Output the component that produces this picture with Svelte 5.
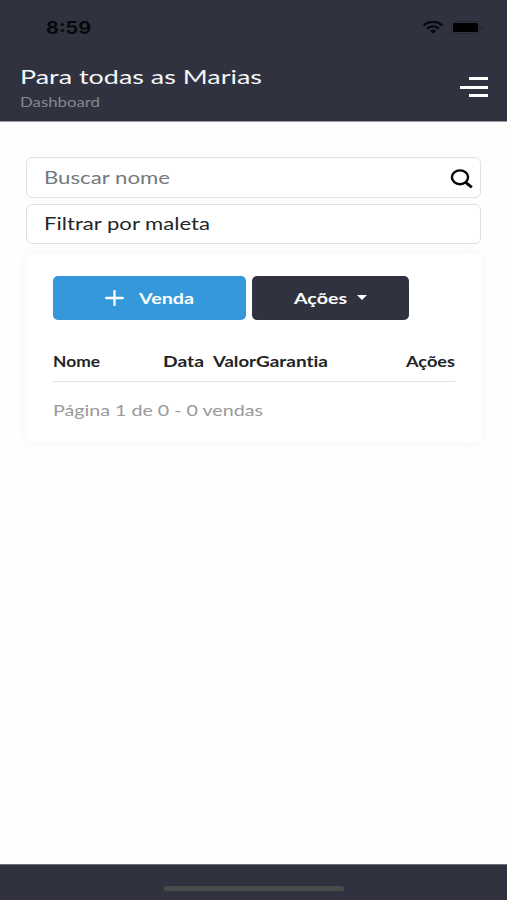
<script>
  const columns = [
    { name: 'Nome', width: 47, offset: 0 },
    { name: 'Data', width: 41, offset: 63 },
    { name: 'Valor', width: 43, offset: 9 },
    { name: 'Garantia', width: 72, offset: 0 },
    { name: 'Ações', width: 49, offset: 78 }
  ];
</script>

<!-- Text set in an expanded width; its baseline is 15px below the top of the box. -->
{#snippet wide(text, width)}
  <svg class="wide" {width} height="20" role="img" aria-label={text}>
    <text x="0" y="15" textLength={width} lengthAdjust="spacingAndGlyphs">{text}</text>
  </svg>
{/snippet}

<div class="screen">
  <header>
    <div class="status">
      <div class="time">{@render wide('8:59', 45)}</div>
      <div class="indicators">
        <span class="dots"><i></i><i></i><i></i><i></i></span>
        <svg class="wifi" width="20" height="13" viewBox="0 0 20 13">
          <g fill="none" stroke="#07080b" stroke-width="2.3">
            <path d="M.8 4.4C6-.4 14-.4 19.2 4.4" />
            <path d="M4.2 7.6c3.3-3 8.3-3 11.6 0" />
          </g>
          <path d="M10 12.5 6.7 9.8c1.8-1.5 4.8-1.5 6.6 0z" fill="#07080b" />
        </svg>
        <svg class="battery" width="32" height="13" viewBox="0 0 32 13">
          <rect x=".5" y=".5" width="28" height="12" rx="3" fill="none" stroke="#262933" />
          <rect x="2" y="2" width="25" height="9" rx="1.5" fill="#000" />
          <path d="M30 4.5q2 2 0 4z" fill="#171920" />
        </svg>
      </div>
    </div>
    <div class="bar">
      <div>
        <div class="title">{@render wide('Para todas as Marias', 242)}</div>
        <div class="subtitle">{@render wide('Dashboard', 80)}</div>
      </div>
      <button class="menu" aria-label="Menu"><i></i><i></i><i></i></button>
    </div>
  </header>

  <main>
    <div class="field search">
      {@render wide('Buscar nome', 126)}
      <svg class="glass" width="24" height="20" viewBox="0 0 24 20" fill="none" stroke="#050505">
        <ellipse cx="10" cy="8.3" rx="8.1" ry="6.9" stroke-width="2.4" />
        <path d="m15.7 13.3 6.1 5" stroke-width="2.9" />
      </svg>
    </div>
    <div class="field filter">{@render wide('Filtrar por maleta', 166)}</div>

    <section class="card">
      <div class="buttons">
        <button class="sale">
          <svg width="19" height="16" viewBox="0 0 19 16" stroke="#fff" stroke-width="2.3" stroke-linecap="round">
            <path d="M9.5 1v14M1.2 8h16.6" />
          </svg>
          {@render wide('Venda', 55)}
        </button>
        <button class="actions">
          {@render wide('Ações', 53)}
          <svg class="caret" width="10" height="5" viewBox="0 0 10 5"><path d="M0 0h10L5 5z" fill="#fff" /></svg>
        </button>
      </div>
      <div class="head">
        {#each columns as col}
          <span style="margin-left: {col.offset}px">{@render wide(col.name, col.width)}</span>
        {/each}
      </div>
      <div class="pages">{@render wide('Página 1 de 0 - 0 vendas', 210)}</div>
    </section>
  </main>

  <footer><i></i></footer>
</div>

<style>
  :global(body) { margin: 0; background: #fff; }
  .screen {
    width: 507px;
    height: 900px;
    display: flex;
    flex-direction: column;
    overflow: hidden;
    font-family: Lato, "Open Sans", sans-serif;
    font-variant-ligatures: none;
    background: #fefefe;
  }
  .screen * { box-sizing: border-box; }
  .wide { display: block; overflow: visible; flex: none; }
  .wide text { fill: currentColor; }
  button { border: 0; padding: 0; font-family: inherit; font-variant-ligatures: none; }
  header {
    height: 122px;
    flex: none;
    background: #30333f;
    border-bottom: 1px solid #9b9da3;
  }
  .status { display: flex; justify-content: space-between; height: 69px; padding: 19px 24px 0 46px; }
  .time { color: #07080b; font: 700 17px Inter, "Liberation Sans", sans-serif; }
  .indicators { display: flex; align-items: flex-start; padding-top: 1.5px; }
  .dots { display: flex; gap: 3px; padding-top: 10px; margin-right: 8px; }
  .dots i { width: 3px; height: 2px; border-radius: 1px; background: #282b35; }
  .battery { margin: .5px 0 0 8px; }
  .bar { display: flex; justify-content: space-between; padding: 0 19px 0 20px; }
  .title { color: #f4f5f7; font-size: 20px; }
  .subtitle { color: #858790; font-size: 13px; margin-top: 3px; }
  .menu {
    width: 28px;
    height: 20px;
    margin-top: 8px;
    background: none;
    display: flex;
    flex-direction: column;
    align-items: flex-end;
    justify-content: space-between;
  }
  .menu i { width: 19px; height: 3px; background: #fff; }
  .menu i:nth-child(2) { width: 28px; }
  main { flex: 1; padding: 35px 26px 0; }
  .field {
    height: 41px;
    border: 1.5px solid #dfe2e3;
    border-radius: 6px;
    background: #fff;
    padding: 3px 6px 0 17px;
    display: flex;
    justify-content: space-between;
    align-items: center;
    font-size: 17.5px;
  }
  .search { color: #75797e; }
  .glass { margin-top: -1px; }
  .filter { color: #25272a; margin-top: 6px; height: 40px; padding-top: 2px; }
  .card {
    height: 188px;
    margin: 10px 0 0 1px;
    padding: 22px 26px 0;
    background: #fff;
    border-radius: 4px;
    box-shadow: 0 0 14px rgba(0, 0, 0, .045);
  }
  .buttons { display: flex; gap: 6px; }
  .buttons button {
    height: 44px;
    border-radius: 5px;
    display: flex;
    align-items: center;
    color: #fff;
    font-size: 15px;
    font-weight: 700;
  }
  .buttons .wide { margin-top: 1px; }
  .sale { width: 193px; background: #3498db; padding-left: 52px; gap: 15px; }
  .actions { width: 157px; background: #30333f; padding-left: 42px; gap: 10px; }
  .caret { margin-top: -2px; }
  .head {
    display: flex;
    height: 62px;
    padding-top: 32px;
    border-bottom: 1px solid #e0e3e5;
    color: #222426;
    font-size: 14.3px;
    font-weight: 700;
  }
  .pages { margin-top: 19px; color: #999; font-size: 15px; }
  footer {
    height: 36px;
    flex: none;
    background: #30333f;
    border-top: 1px solid #6b717b;
    display: flex;
    justify-content: center;
    padding-top: 21px;
  }
  footer i { width: 180px; height: 5px; border-radius: 3px; background: #4c4b4c; }
</style>
